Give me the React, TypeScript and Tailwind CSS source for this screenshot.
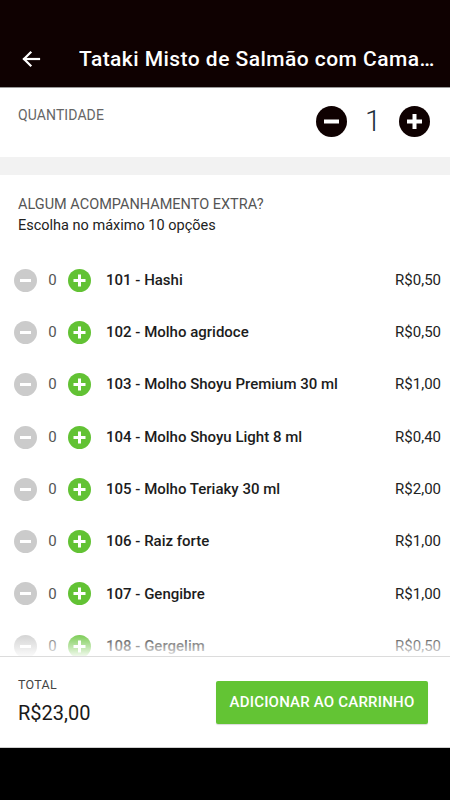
import React from 'react';

const extras = [
  { code: '101', name: 'Hashi', price: 'R$0,50' },
  { code: '102', name: 'Molho agridoce', price: 'R$0,50' },
  { code: '103', name: 'Molho Shoyu Premium 30 ml', price: 'R$1,00' },
  { code: '104', name: 'Molho Shoyu Light 8 ml', price: 'R$0,40' },
  { code: '105', name: 'Molho Teriaky 30 ml', price: 'R$2,00' },
  { code: '106', name: 'Raiz forte', price: 'R$1,00' },
  { code: '107', name: 'Gengibre', price: 'R$1,00' },
  { code: '108', name: 'Gergelim', price: 'R$0,50' },
  { code: '109', name: 'Cream cheese', price: 'R$2,00' },
];

function RoundIcon({ kind, size, bg, bar, thick }: { kind: 'plus' | 'minus'; size: number; bg: string; bar: number; thick: number }) {
  const c = size / 2;
  return (
    <svg width={size} height={size} viewBox={`0 0 ${size} ${size}`} className="shrink-0">
      <circle cx={c} cy={c} r={c} fill={bg} />
      <rect x={c - bar / 2} y={c - thick / 2} width={bar} height={thick} fill="#fff" />
      {kind === 'plus' && <rect x={c - thick / 2} y={c - bar / 2} width={thick} height={bar} fill="#fff" />}
    </svg>
  );
}

export default function App() {
  return (
    <div className="w-[450px] h-[800px] flex flex-col bg-white overflow-hidden" style={{ fontFamily: 'Roboto, "Noto Sans", sans-serif' }}>
      {/* toolbar */}
      <div className="h-[88px] shrink-0 bg-[#0f0101] border-b border-[#9a9a9a] flex items-end">
        <div className="h-[57px] w-full flex items-center">
          <svg className="ml-[19px] shrink-0" width="24" height="24" viewBox="0 0 24 24" fill="none" stroke="#fff" strokeWidth="2.2" strokeLinecap="square">
            <path d="M20 12H5" />
            <path d="M11.5 5.5L5 12l6.5 6.5" />
          </svg>
          <h1 className="ml-[36px] mr-[12px] text-white text-[21px] font-medium truncate leading-[28px] tracking-[0.45px]">
            Tataki Misto de Salmão com Camarão Grelhado
          </h1>
        </div>
      </div>

      {/* quantity */}
      <div className="h-[69px] shrink-0 flex justify-between pl-[18px] pr-[20px]">
        <span className="pt-[17px] text-[14px] leading-[20px] text-[#666] tracking-[0.1px]">QUANTIDADE</span>
        <div className="flex items-center -mt-[3px]">
          <RoundIcon kind="minus" size={31} bg="#0f0101" bar={15} thick={4} />
          <span className="w-[52px] text-center text-[29px] font-light text-[#1d2d3a] leading-[34px]">1</span>
          <RoundIcon kind="plus" size={31} bg="#0f0101" bar={15} thick={4} />
        </div>
      </div>
      <div className="h-[18px] shrink-0 bg-[#f2f2f2]" />

      {/* extras */}
      <div className="relative flex-1 overflow-hidden">
        <div className="pt-[19px] pl-[18px]">
          <p className="text-[14.5px] leading-[21px] text-[#555]">ALGUM ACOMPANHAMENTO EXTRA?</p>
          <p className="text-[14.5px] leading-[21px] text-[#222]">Escolha no máximo 10 opções</p>
        </div>
        <div className="mt-[18px]">
          {extras.map((e) => (
            <div key={e.code} className="h-[52.3px] flex items-center pl-[14px] pr-[9px]">
              <RoundIcon kind="minus" size={23} bg="#cbcbcb" bar={11} thick={3} />
              <span className="w-[31px] text-center text-[15px] text-[#555]">0</span>
              <RoundIcon kind="plus" size={23} bg="#62c234" bar={12} thick={3} />
              <span className="ml-[15px] flex-1 text-[15px] font-medium text-[#1c1c1c]">
                {e.code} - {e.name}
              </span>
              <span className="text-[15px] text-[#222]">{e.price}</span>
            </div>
          ))}
        </div>
        <div className="absolute left-0 right-0 bottom-0 h-[26px] bg-gradient-to-b from-white/0 to-white/90" />
      </div>

      {/* footer */}
      <div className="h-[91px] shrink-0 border-t border-[#dcdcdc] flex items-center justify-between pl-[18px] pr-[22px]">
        <div className="flex flex-col -mt-[2px]">
          <span className="text-[12.5px] text-[#444] tracking-[0.3px] leading-[18px]">TOTAL</span>
          <span className="mt-[6px] text-[20px] text-[#1a1a1a] leading-[26px]">R$23,00</span>
        </div>
        <button className="w-[212px] h-[43px] rounded-[2px] bg-[#63c434] text-white text-[15px] font-medium tracking-[0.2px] shadow-[0_1px_1px_rgba(0,0,0,0.15)]">
          ADICIONAR AO CARRINHO
        </button>
      </div>
      <div className="h-[53px] shrink-0 bg-black border-t border-[#cfcfcf]" />
    </div>
  );
}
